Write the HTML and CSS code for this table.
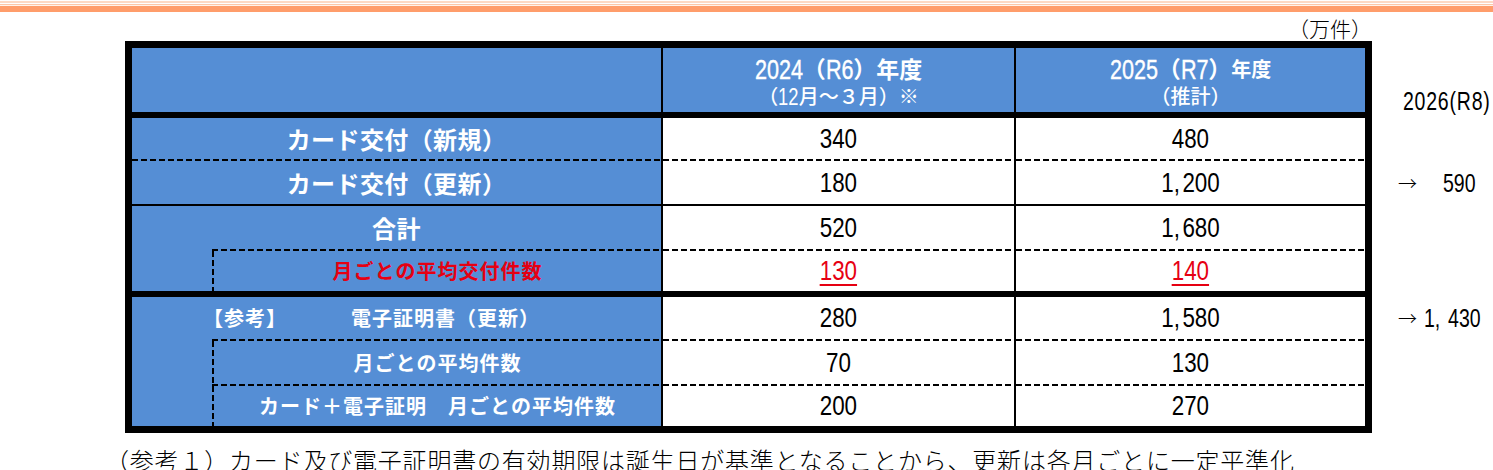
FILE: index.html
```html
<!DOCTYPE html>
<html lang="ja">
<head>
<meta charset="utf-8">
<title>カード交付件数</title>
<link rel="stylesheet" href="styles.css">
</head>
<body>
<div class="band"></div>
<div class="main">
  <div class="unit">（万件）</div>
  <div class="board">
    <div class="tbl">
      <div class="lab hd"></div>
      <div class="val hd">
        <div class="h1"><span class="cn n4">2024</span>（<span class="cn r2">R6</span>）年度</div>
        <div class="h2">（<span class="cn d2">12</span>月～３月）※</div>
      </div>
      <div class="val hd">
        <div class="h1"><span class="cn n4">2025</span>（<span class="cn r2">R7</span>）<span class="sm">年度</span></div>
        <div class="h2">（推計）</div>
      </div>

      <div class="lab dd">カード交付（新規）</div>
      <div class="val dd"><span class="num">340</span></div>
      <div class="val dd"><span class="num">480</span></div>

      <div class="lab sd">カード交付（更新）</div>
      <div class="val sd"><span class="num">180</span></div>
      <div class="val sd"><span class="num">1<span class="cm">,</span>200</span></div>

      <div class="lab dd80 wide">合計</div>
      <div class="val dd"><span class="num">520</span></div>
      <div class="val dd"><span class="num">1<span class="cm">,</span>680</span></div>

      <div class="lab s vl th in red">月ごとの平均交付件数</div>
      <div class="val th"><span class="num red ul">130</span></div>
      <div class="val th"><span class="num red ul">140</span></div>

      <div class="lab s dd80 refrow"><span class="ref">【参考】</span><span>電子証明書（更新）</span></div>
      <div class="val dd"><span class="num">280</span></div>
      <div class="val dd"><span class="num">1<span class="cm">,</span>580</span></div>

      <div class="lab s vld in">月ごとの平均件数</div>
      <div class="val dd"><span class="num">70</span></div>
      <div class="val dd"><span class="num">130</span></div>

      <div class="lab s vl in">カード＋電子証明　月ごとの平均件数</div>
      <div class="val"><span class="num">200</span></div>
      <div class="val"><span class="num">270</span></div>
    </div>

    <div class="side">
      <div class="sc top"><span class="sn yr">2026(R8)</span></div>
      <div class="sc"></div>
      <div class="sc mid"><span class="arw">→</span><span class="sn g1">590</span></div>
      <div class="sc"></div>
      <div class="sc"></div>
      <div class="sc mid"><span class="arw">→</span><span class="sn g2">1<span class="scm">,</span>430</span></div>
      <div class="sc"></div>
      <div class="sc"></div>
    </div>
  </div>
</div>
<p class="note">（参考１）カード及び電子証明書の有効期限は誕生日が基準となることから、更新は各月ごとに一定平準化</p>
</body>
</html>
```

FILE: styles.css
```css
* {
  box-sizing: border-box;
  margin: 0;
  padding: 0;
}

html, body {
  width: 1493px;
  height: 470px;
  overflow: hidden;
  background: #fff;
}

body {
  font-family: "Noto Sans CJK JP", "Noto Sans", sans-serif;
  color: #000;
}

.band {
  height: 12px;
  background: linear-gradient(to bottom,
    #fff 0, #fff 1px,
    #fdd9c4 1px, #fdd9c4 3px,
    #fff 3px, #fff 4px,
    #fcc7a8 4px, #fcc7a8 5px,
    #fff3ec 5px, #fff3ec 6px,
    #ff9d6b 6px, #ff9d6b 12px);
}

.main {
  padding-left: 125px;
}

.unit {
  width: 1247px;
  height: 29px;
  display: flex;
  justify-content: flex-end;
  align-items: flex-end;
  font-size: 21px;
  font-weight: 300;
  line-height: 24px;
  padding-bottom: 1px;
}

.board {
  display: flex;
}

.tbl {
  width: 1247px;
  flex: none;
  border: 7px solid #000;
  display: grid;
  grid-template-columns: 529px 353px 351px;
  grid-template-rows: 70px 43px 45px 45px 46px 44px 45px 40px;
}

.lab {
  background-color: #558ed5;
  color: #fff;
  font-weight: 700;
  font-size: 24px;
  letter-spacing: 0.4px;
  display: flex;
  align-items: center;
  justify-content: center;
  line-height: 1;
  white-space: nowrap;
}

.lab.s {
  font-size: 20px;
  letter-spacing: 1px;
}

.val {
  border-left: 2px solid #000;
  background-color: #fff;
  display: flex;
  align-items: center;
  justify-content: center;
  line-height: 1;
}

.hd {
  background-color: #558ed5;
  border-bottom: 6px solid #000;
}

.val.hd {
  flex-direction: column;
  justify-content: flex-start;
  color: #fff;
  gap: 3px;
  padding-top: 9px;
}

.h1 {
  font-family: "Liberation Sans", "Noto Sans CJK JP", sans-serif;
  font-size: 23px;
  font-weight: 700;
  line-height: 26px;
  height: 26px;
  white-space: nowrap;
  display: flex;
  align-items: center;
}

.h2 {
  font-family: "Liberation Sans", "Noto Sans CJK JP", sans-serif;
  font-size: 20px;
  font-weight: 500;
  line-height: 22px;
  height: 22px;
  white-space: nowrap;
  display: flex;
  align-items: center;
}

.sm {
  font-size: 20px;
}

.cn {
  display: inline-block;
  font-family: "Liberation Sans", Arial, sans-serif;
  font-weight: 400;
  font-size: 27px;
  line-height: 22px;
  transform: scaleX(0.8);
  transform-origin: left center;
  -webkit-text-stroke: 0.4px #fff;
}

.cn.n4 { margin-right: -0.445em; }
.cn.r2 { margin-right: -0.256em; }
.cn.d2 { font-size: 23px; line-height: 20px; margin-right: -0.222em; -webkit-text-stroke: 0; }

.num {
  display: inline-block;
  font-family: "Liberation Sans", Arial, sans-serif;
  font-size: 28px;
  line-height: 1;
  transform: scaleX(0.8);
}

.cm {
  margin-right: 3px;
}

.red {
  color: #e60012;
}

.ul {
  text-decoration: underline;
  text-decoration-color: #e60012;
  text-decoration-thickness: 2px;
  text-underline-offset: 4px;
}

/* separators */
.sd {
  border-bottom: 2px solid #000;
}

.th {
  border-bottom: 6px solid #000;
}

.dd {
  padding-bottom: 2px;
  background-image: repeating-linear-gradient(to right, #000 0, #000 6px, transparent 6px, transparent 9px);
  background-size: 100% 2px;
  background-position: left bottom;
  background-repeat: no-repeat;
}

.dd80 {
  padding-bottom: 2px;
  background-image: repeating-linear-gradient(to right, #000 0, #000 6px, transparent 6px, transparent 9px);
  background-size: calc(100% - 80px) 2px;
  background-position: right bottom;
  background-repeat: no-repeat;
}

.vl {
  background-image: repeating-linear-gradient(to bottom, #000 0, #000 6px, transparent 6px, transparent 9px);
  background-size: 2px 100%;
  background-position: 80px 0;
  background-repeat: no-repeat;
}

.vld {
  padding-bottom: 2px;
  background-image:
    repeating-linear-gradient(to bottom, #000 0, #000 6px, transparent 6px, transparent 9px),
    repeating-linear-gradient(to right, #000 0, #000 6px, transparent 6px, transparent 9px);
  background-size: 2px 100%, calc(100% - 80px) 2px;
  background-position: 80px 0, right bottom;
  background-repeat: no-repeat, no-repeat;
}

.in {
  padding-left: 82px;
}

.lab.wide {
  font-size: 24px;
  letter-spacing: 0.5px;
}

.lab.refrow {
  justify-content: flex-start;
  padding-left: 71px;
}

.ref {
  margin-right: 64px;
}

/* side annotations */
.side {
  flex: 1;
  display: grid;
  grid-template-rows: 77px 43px 45px 45px 46px 44px 45px 47px;
}

.sc {
  display: flex;
  align-items: center;
  padding-left: 26px;
}

.sc.top {
  align-items: flex-end;
  padding-bottom: 5px;
  padding-left: 31px;
}

.sc.mid {
  padding-bottom: 2px;
}

.sn {
  display: inline-block;
  font-family: "Liberation Sans", Arial, sans-serif;
  font-size: 25px;
  line-height: 24px;
  transform: scaleX(0.78);
  transform-origin: left center;
  white-space: nowrap;
}

.yr {
  letter-spacing: 1px;
}

.arw {
  font-size: 19px;
  font-weight: 300;
  line-height: 24px;
}

.g1 {
  margin-left: 26px;
}

.g2 {
  margin-left: 7px;
}

.scm {
  margin-right: 10px;
}

.note {
  margin-top: 15px;
  padding-left: 105px;
  font-size: 24px;
  font-weight: 300;
  line-height: 24px;
  letter-spacing: 0.8px;
  white-space: nowrap;
}
```
